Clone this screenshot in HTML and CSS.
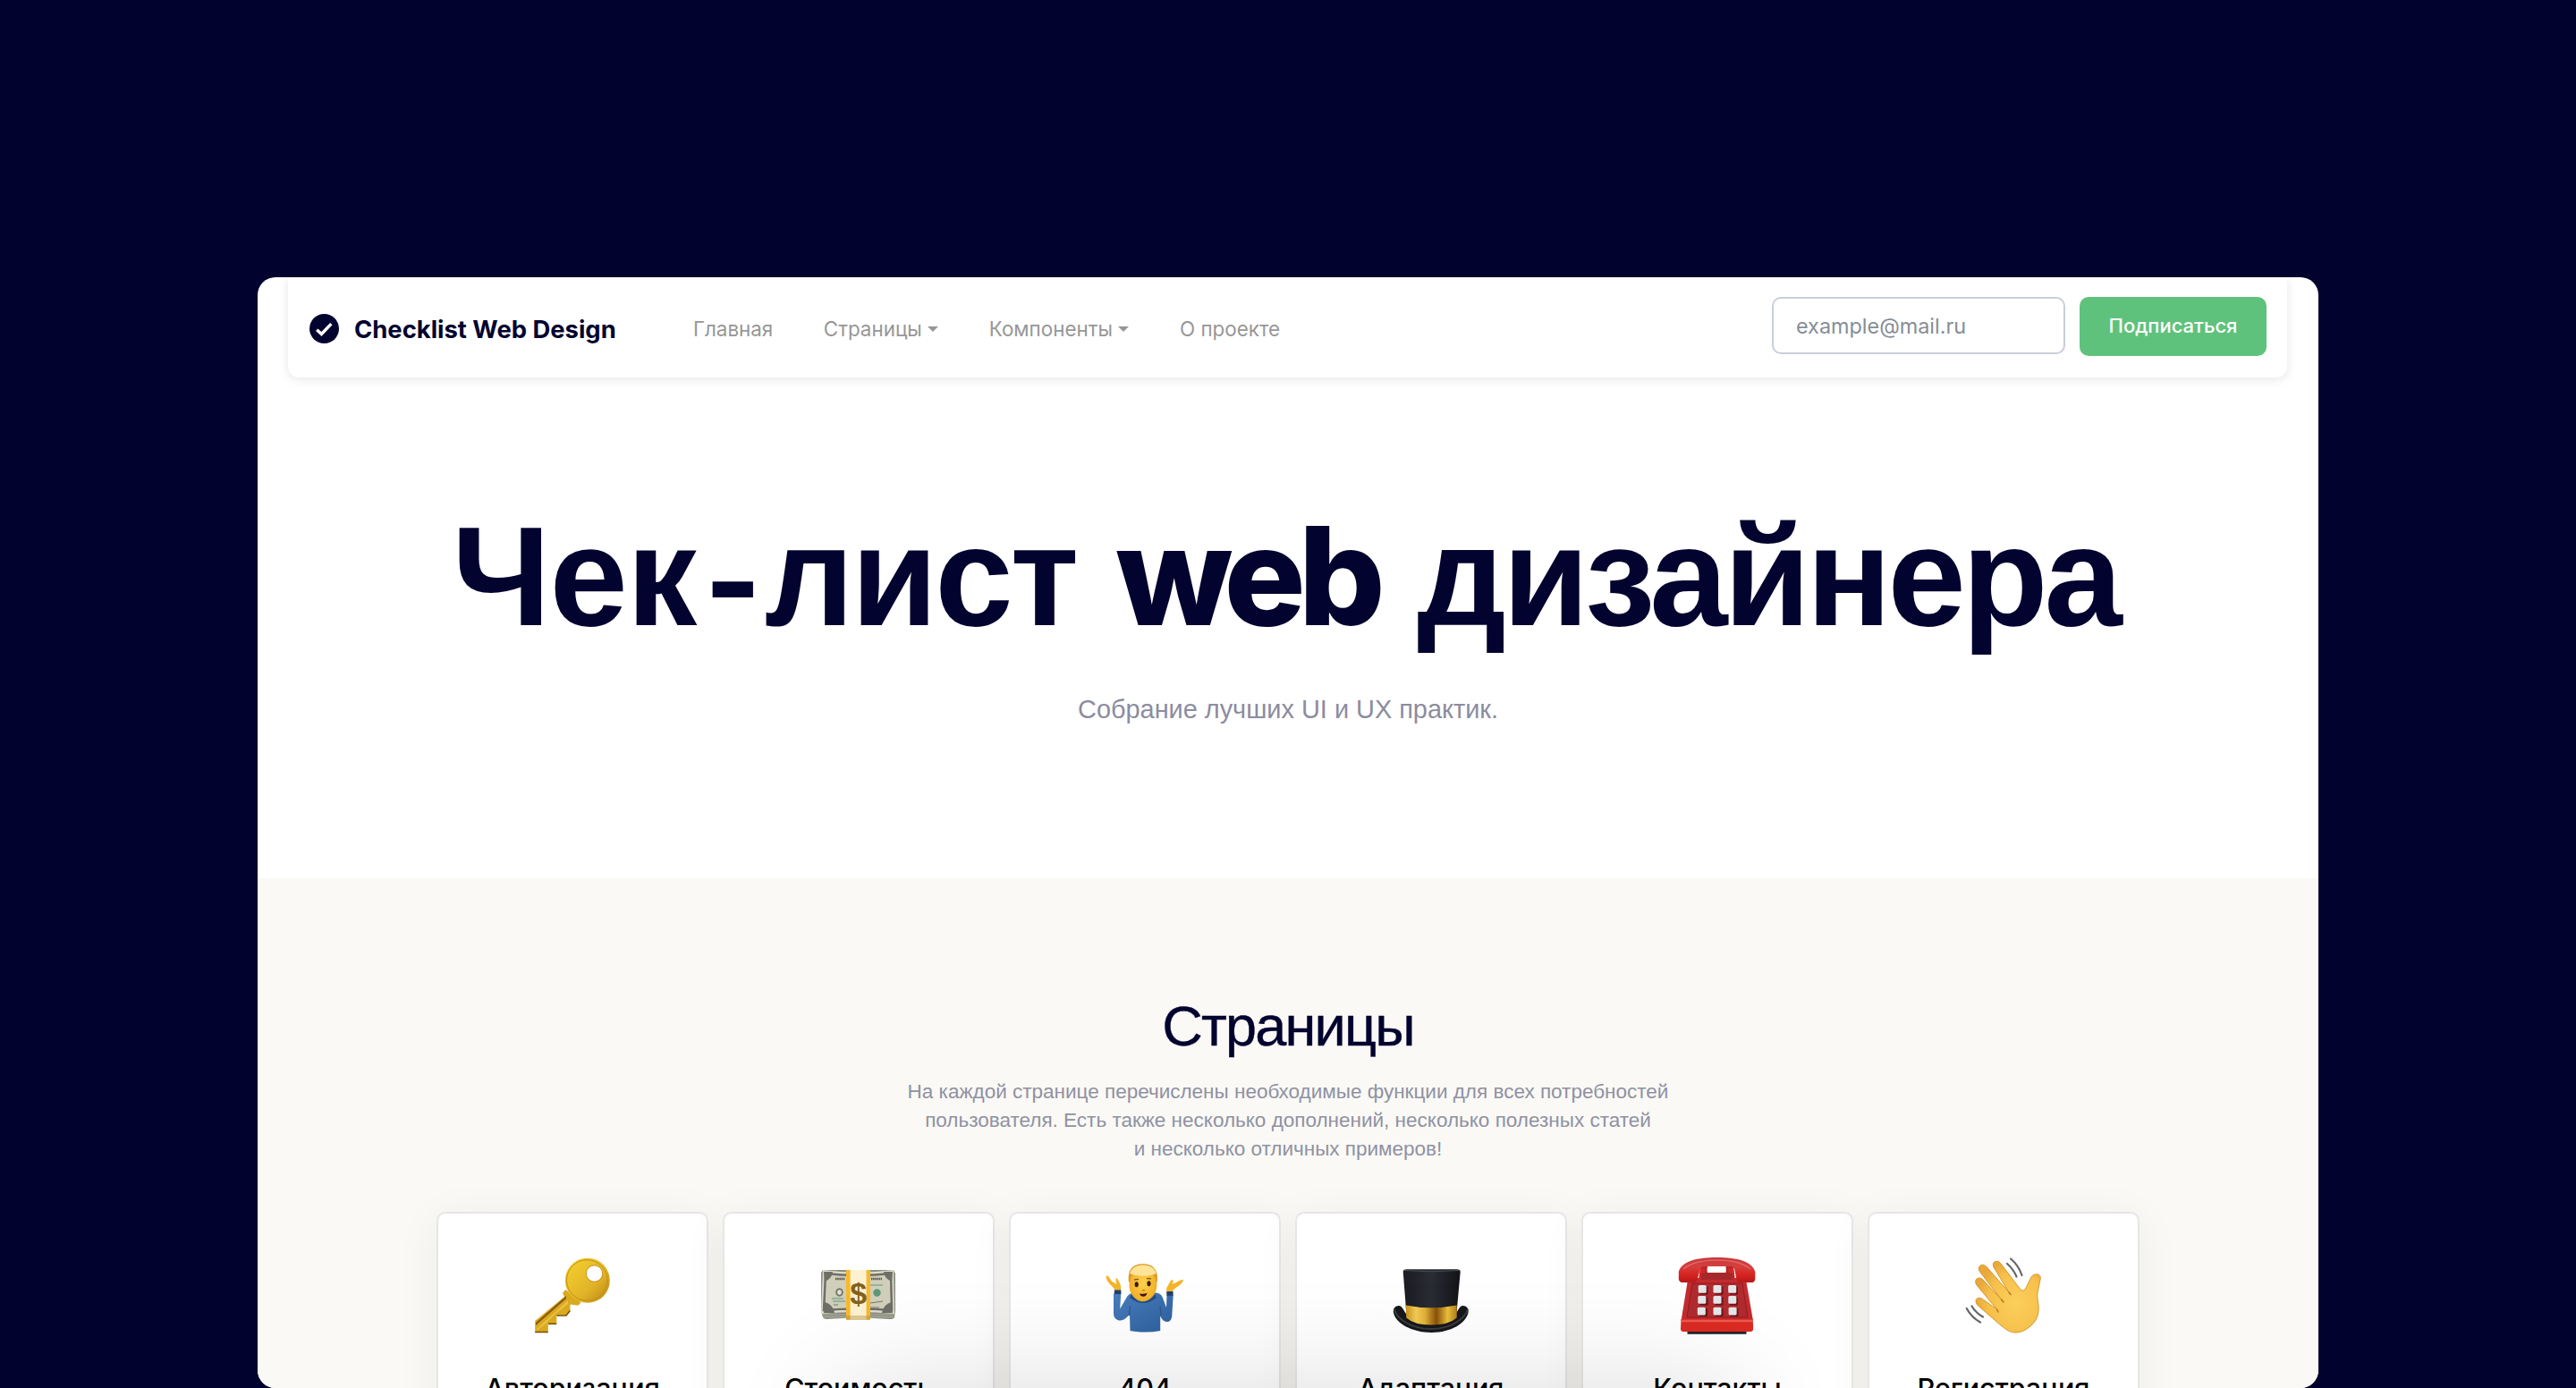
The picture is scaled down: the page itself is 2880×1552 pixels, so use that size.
FILE: index.html
```html
<!DOCTYPE html>
<html lang="ru">
<head>
<meta charset="utf-8">
<title>Checklist Web Design</title>
<link rel="stylesheet" href="styles.css">
</head>
<body>
<div class="window">
  <nav class="navbar">
    <a class="brand">
      <svg class="brand-icon" viewBox="0 0 32 32"><circle cx="16" cy="16" r="16" fill="#03032f"/><path d="M8 17.2l5 4.6 10.6-11" fill="none" stroke="#fff" stroke-width="3.4"/></svg>
      <span>Checklist Web Design</span>
    </a>
    <div class="links">
      <a>Главная</a>
      <a>Страницы<i class="caret"></i></a>
      <a>Компоненты<i class="caret"></i></a>
      <a>О проекте</a>
    </div>
    <form class="subscribe">
      <input class="email" type="text" placeholder="example@mail.ru">
      <button class="submit" type="button">Подписаться</button>
    </form>
  </nav>

  <header class="hero">
    <h1 class="title"><span class="wide">Чек</span><span class="latin dash">-</span>лист <span class="latin">web</span> <span class="tight">дизайнера</span></h1>
    <p class="subtitle">Собрание лучших UI и UX практик.</p>
  </header>

  <section class="pages">
    <h2 class="heading">Страницы</h2>
    <p class="lead">На каждой странице перечислены необходимые функции для всех потребностей<br>пользователя. Есть также несколько дополнений, несколько полезных статей<br>и несколько отличных примеров!</p>
    <div class="cards">
      <article class="card">
        <svg class="icon" viewBox="0 0 96 96">
          <defs>
            <linearGradient id="gold" x1="0" y1="0" x2="1" y2="1"><stop offset="0" stop-color="#f7d32f"/><stop offset=".6" stop-color="#e2b428"/><stop offset="1" stop-color="#b98512"/></linearGradient>
          </defs>
          <path d="M40.2 42L37 46l2 4L6.2 77v13h14.600v-9.500l2.500-.5h7v-9l3-.5h7.500l4.700-5v-7l9 1.200 3-3.500z" fill="#d9a920"/>
          <path d="M41 49L7 79v3l34-30z" fill="#8a5a0c"/>
          <path d="M43 54L8 86v2l10-8 9-9 16-13z" fill="#e9c043"/>
          <path d="M6.200 89.500h14.600M21 80.200h9.200M30.500 71h10.500l4.300-5.500" fill="none" stroke="#7a4d08" stroke-width="1.500"/>
          <path fill-rule="evenodd" d="M64.800 6.700a25 25 0 1 0 .01 0zM72.500 15a9 9 0 1 1-.01 0z" fill="url(#gold)"/>
          <circle cx="64.300" cy="31.500" r="22.800" fill="none" stroke="#bf8f16" stroke-width="1"/>
          <circle cx="72.500" cy="24" r="9.200" fill="none" stroke="#c7961a" stroke-width="1"/>
        </svg>
        <h3 class="name">Авторизация</h3>
      </article>
      <article class="card">
        <svg class="icon" viewBox="0 0 96 96">
          <path d="M6 66l2 7q1 2 4 2l35-2 36 2q4 0 5-2l1-7V24l-2-4H8l-2 3z" fill="#8d9080"/>
          <path d="M7 70h81M8 72.500h79" stroke="#b5b7a6" stroke-width=".8"/>
          <path d="M8 20q39 5 79 0l1 49q-41-4-82 0z" fill="#deddcb"/>
          <path d="M11 24q36 4 73 0l1 41q-38-3-76 0z" fill="#cfcfba" stroke="#6f6e68" stroke-width="2.500"/>
          <g fill="#6f6e68"><path d="M9 22h10q-1 8-9 11zM86 22H76q1 8 9 11zM9 68h12q-2-10-11-12zM86 68H74q2-10 11-12z"/></g>
          <path d="M22 30h11M62 30h12" stroke="#55554f" stroke-width="2.500" stroke-dasharray="1.500 .7"/>
          <ellipse cx="26.500" cy="45" rx="3.300" ry="3.800" fill="#e4e2d2" stroke="#77776b" stroke-width="2"/>
          <circle cx="68.500" cy="45.500" r="4.200" fill="#5d9878"/>
          <path d="M18 52h13M19 55h14M61 37h14" stroke="#86aa90" stroke-width="1.300"/>
          <path d="M61 57l14-2M20 59h5M61 62h10" stroke="#77776b" stroke-width="1"/>
          <path d="M34 20h27v55.800H34z" fill="#f9b82a"/>
          <path d="M38.600 20h18v55.800h-18z" fill="#fdf1cf"/>
          <path d="M34 71h27v4.800H34z" fill="#a98d3d" opacity=".4"/>
          <text x="47.600" y="57.500" text-anchor="middle" class="dollar">$</text>
        </svg>
        <h3 class="name">Стоимость</h3>
      </article>
      <article class="card">
        <svg class="icon" viewBox="0 0 96 96">
          <defs>
            <linearGradient id="shirt" x1="0" y1="0" x2="1" y2="1"><stop offset="0" stop-color="#4a7dbd"/><stop offset="1" stop-color="#2c5f9c"/></linearGradient>
            <radialGradient id="face" cx=".5" cy=".5" r=".65"><stop offset="0" stop-color="#ffd34d"/><stop offset="1" stop-color="#eda51f"/></radialGradient>
          </defs>
          <g fill="#f4b52c"><path d="M14.500 43c-1-4-5-5.500-8-10-2.500-4-2-7-1-6.800 2 .3 4 5 6.500 7l4 2.800-.5-5c0-3 2-2 3.500 2 1.500 3 3 5 1.800 10z"/><path d="M79 44c1-3 4-4 6.500-6 3-2 5.500-5 5.300-7-1.500-.8-5.500 2-8.800 3.500l-3.500 1c1.500-3 1.500-4.500 0-4.500-2 .5-3 4-4.500 6-1.500 2.500-2.500 4-1.600 7z"/></g>
          <path d="M13 46.500h8.200l-1 17L28 50q3-4.500 8-4.500h24q5 0 7.500 4.500l4.500 12 .5-14h7.200l-1.500 24q-1 6-5.500 6-5-.5-7.500-6.500L65.200 88q-16 3-33.700 0l-.5-18-5 4.500q-4 3-8.500 1.500-4.500-2-4.500-7z" fill="url(#shirt)"/>
          <path d="M31.500 60l-1 11M65 60l1 11" stroke="#2a568e" stroke-width="1.200"/>
          <path d="M13.800 42.500h7.600v4.500h-7.600zM72.300 44h7.300v4.800h-7.300z" fill="#233f6d"/>
          <path d="M33 47q13 13 26 0l2 4q-14 12-30 0z" fill="#254e85"/>
          <path d="M30.500 27c0-8 6-12 15.500-12s15.300 4 15.300 12v11c0 9-8 17.300-15.500 17.300S30.500 47 30.500 38z" fill="url(#face)"/>
          <path d="M29.800 33c-1-12 3-19.700 16-19.700s17 8 16 19.700l-1.500 1c0-5-1.500-7.500-4-9.500-7 2-16 1.500-21 0-2.500 2-4 4-4 9.500z" fill="#d99b2b"/>
          <path d="M31 24c2-6 7-9.500 15-9.500S59 18 60.500 24c-9 4-21 3.500-29.500 0z" fill="#ffe396"/>
          <ellipse cx="38.700" cy="36.300" rx="2.100" ry="3" fill="#3b1e08"/><ellipse cx="52.500" cy="35.300" rx="2.100" ry="3" fill="#3b1e08"/>
          <path d="M36 31l5-.7M50 29.500l5 .3" stroke="#8b5718" stroke-width="1.300"/>
          <path d="M45 42.500q1.500 1 3-.2" fill="none" stroke="#b9761b" stroke-width="1.200"/>
          <path d="M42 46.500q5 1 8.500-.8-1 3.800-4 4-3.500 0-4.500-3.200z" fill="#45140b"/>
        </svg>
        <h3 class="name">404</h3>
      </article>
      <article class="card">
        <svg class="icon" viewBox="0 0 96 96">
          <defs>
            <linearGradient id="felt" x1="0" x2="1"><stop offset="0" stop-color="#1b1c20"/><stop offset=".5" stop-color="#2a2c35"/><stop offset="1" stop-color="#121316"/></linearGradient>
            <linearGradient id="ribbon" x1="0" x2="1"><stop offset="0" stop-color="#c8941c"/><stop offset=".2" stop-color="#f4cc55"/><stop offset=".38" stop-color="#e1b037"/><stop offset=".6" stop-color="#8a500a"/><stop offset=".82" stop-color="#eac03c"/><stop offset="1" stop-color="#b27f15"/></linearGradient>
          </defs>
          <path d="M12 60c-4 0-7 3-6 8 2 11 20 22 42.500 22S87 79 89.500 68c1-5-2-8-6-8-4 .5-5 5-8 9H20c-3-4-4-8.500-8-9z" fill="#17181b"/>
          <path d="M7 64c2 10 18 22 41 22s38-12 41-22" fill="none" stroke="#3b3c42" stroke-width="2"/>
          <path d="M16.700 22q0-2.700 4-2.700h56q4 0 4 2.700l-4.200 46H20.300z" fill="url(#felt)"/>
          <path d="M18 20.500q31 2.500 61.500 0" fill="none" stroke="#4b4d56" stroke-width="1"/>
          <path d="M19.700 59.500q28 5.500 57 0v14q-9 8-28.500 8-19 0-28-8z" fill="url(#ribbon)"/>
        </svg>
        <h3 class="name">Адаптация</h3>
      </article>
      <article class="card">
        <svg class="icon" viewBox="0 0 96 96">
          <defs>
            <linearGradient id="handset" x1="0" y1="0" x2="0" y2="1"><stop offset="0" stop-color="#c9373a"/><stop offset=".35" stop-color="#d4403f"/><stop offset=".7" stop-color="#d8231f"/><stop offset="1" stop-color="#b5191b"/></linearGradient>
          </defs>
          <path d="M14.500 87h66v4.700h-66z" fill="#222326"/>
          <path d="M29 16h8v7h20.500v-7H66l2 16H27z" fill="#b3262a"/>
          <path d="M15 31q1-2 4-2h57q3 0 4 2l8 46H7.500z" fill="#c42a2e"/>
          <path d="M20 35h56l6 38H14z" fill="#b02b2f" stroke="#8f1d22" stroke-width="1"/>
          <path d="M7.500 75h80.300l.3 11q-.3 3-3 3H10q-3 0-3-3z" fill="#db2a22"/>
          <path d="M8 77h80" stroke="#ec5a50" stroke-width="2.500"/>
          <path d="M4.800 30V22C8 10.500 24 6 47.500 6S87 10.500 90.300 22v8q-.5 4-3.500 4H73q-2.500 0-3.500-3L67 18.500q-1-2.500-4-2.500H33q-3 0-4 2.500L25.500 31q-1 3-3.500 3H8.500q-3 0-3.700-4z" fill="url(#handset)"/>
          <path d="M10 19Q22 9 47.500 9T85 19" fill="none" stroke="#ea7773" stroke-width="1.500" opacity=".7"/>
          <path d="M29 18h5v11h-5zM60.500 18h5v11h-5z" fill="#d22624"/>
          <path d="M30 24q18-4 35 0v7H30z" fill="#a5282b"/>
          <rect x="36.600" y="17" width="20.800" height="6" rx="1" fill="#fff"/>
          <g fill="#6b1518"><path d="M28.500 38.500h9v9h-9zM45.500 38.500h9v9h-9zM62 38.500h9v9h-9zM28.500 50.500h9v9h-9zM45.500 50.500h9v9h-9zM62 50.500h9v9h-9zM28 63h9v9h-9zM45.500 63h9v9h-9zM62.500 63h9v9h-9z"/></g>
          <g fill="#e4e6e8"><rect x="26.700" y="37" width="9" height="8.700" rx="1.500"/><rect x="43.500" y="37" width="9" height="8.700" rx="1.500"/><rect x="60.200" y="37" width="9" height="8.700" rx="1.500"/><rect x="26.300" y="49" width="9" height="8.700" rx="1.500"/><rect x="43.500" y="49" width="9" height="8.700" rx="1.500"/><rect x="60.300" y="49" width="9" height="8.700" rx="1.500"/><rect x="25.800" y="61.700" width="9" height="8.700" rx="1.500"/><rect x="43.500" y="61.700" width="9" height="8.700" rx="1.500"/><rect x="60.600" y="61.700" width="9" height="8.700" rx="1.500"/></g>
        </svg>
        <h3 class="name">Контакты</h3>
      </article>
      <article class="card">
        <svg class="icon" viewBox="0 0 96 96">
          <defs>
            <radialGradient id="palm" cx=".62" cy=".58" r=".6"><stop offset="0" stop-color="#fbcf5b"/><stop offset=".7" stop-color="#f6c14b"/><stop offset="1" stop-color="#e9a93a"/></radialGradient>
          </defs>
          <path d="M45 82L18.500 59c-4-6 1-10 6-6.500L40.500 64 18 37c-4-6 2-11 7-6l20.500 22L21.500 22c-4-6 3-11 8-5l24.500 28-17-28c-3-6 4-9.500 8-4l22 29c2.500 2 5 1 7-4l5-10c3-5 11-4 10.300 1.500l-3.300 16c-1 6 2 14 1 21C86 79 73 89.500 62 90c-6 .3-11-3-17-8z" fill="url(#palm)" stroke="#d8962f" stroke-width="1" stroke-linejoin="round"/>
          <path d="M40.500 64l1.500 3M45.500 53l2.500 3M54 45l2 2.500" stroke="#b77420" stroke-width="1.500" stroke-linecap="round"/>
          <path d="M56 7.500Q65 15 68.500 26M52 13q7 6 10.500 14.500M6.700 63Q12 73 22 78.500M12.500 60.500Q17 68 25 72.500" fill="none" stroke="#666" stroke-width="2.200" stroke-linecap="round"/>
        </svg>
        <h3 class="name">Регистрация</h3>
      </article>
    </div>
  </section>
</div>
</body>
</html>
```
FILE: styles.css
```css
* { box-sizing: border-box; }

body {
  margin: 0;
  height: 1552px;
  padding: 310px 288px 0;
  overflow: hidden;
  background: #02022f;
  color: #03032f;
  font-family: "Liberation Sans", Arial, sans-serif;
}

.window {
  position: relative;
  height: 1241.5px;
  overflow: hidden;
  border-radius: 20px;
  background: #fff;
}

/* soft shade rising from the bottom edge */
.window::after {
  content: "";
  position: absolute;
  top: 1242px;
  left: 650px;
  width: 1004px;
  height: 300px;
  box-shadow: 0 0 130px rgba(0, 0, 0, .14);
}

.navbar {
  display: flex;
  align-items: center;
  width: 2235px;
  height: 112px;
  margin: 0 34px;
  padding: 3px 23px 0 24px;
  border-radius: 0 0 12px 12px;
  background: #fff;
  box-shadow: 0 2px 12px rgba(0, 0, 0, .1);
  font-family: Inter, sans-serif;
}

.brand { display: flex; align-items: center; gap: 17px; width: 429px; font-size: 27.4px; font-weight: 700; line-height: 40px; white-space: nowrap; }
.brand-icon { width: 33px; height: 33px; }

.links { display: flex; gap: 56.5px; color: #979797; font-size: 22.4px; line-height: 32px; }
.caret {
  display: inline-block;
  margin-left: 6.5px;
  vertical-align: 5px;
  border: 6px solid transparent;
  border-top-color: #979797;
  border-bottom: 0;
}

.subscribe { display: flex; align-self: flex-start; gap: 16px; margin: 19px 0 0 auto; }
.email {
  width: 328px;
  height: 64px;
  padding: 0 25px;
  border: 2px solid #c8cfda;
  border-radius: 10px;
  background: #fff;
  font: 23.4px Inter, sans-serif;
}
.email::placeholder { color: #868e96; opacity: 1; }
.submit {
  width: 209px;
  height: 66px;
  padding: 0 0 2px;
  border: 0;
  border-radius: 10px;
  background: #5fc27c;
  color: #fff;
  font: 500 22px Inter, sans-serif;
}

.hero { height: 560px; padding-top: 133px; text-align: center; }
.title { margin: 0 0 38px -6px; font-size: 157px; font-weight: 700; line-height: 180px; letter-spacing: -3px; word-spacing: 3px; white-space: nowrap; }
.latin { font-family: Inter, sans-serif; font-size: 152px; font-weight: 800; line-height: 0; letter-spacing: -8px; }
.dash { margin: 0 12px 0 9px; font-size: 135px; }
.wide { letter-spacing: -1px; }
.tight { letter-spacing: -4.1px; }
.subtitle { margin: 0; color: #8c8ca0; font-size: 28.9px; line-height: 40px; }

.pages { height: 600px; padding-top: 127px; background: #faf9f5; text-align: center; }
.heading { margin: 0 0 20px; font-size: 63px; font-weight: 400; line-height: 76px; letter-spacing: -1.8px; -webkit-text-stroke: .4px #03032f; }
.lead { margin: 0; color: #8f91a3; font-size: 22.5px; line-height: 32px; }

.cards { display: grid; grid-template-columns: repeat(6, 304px); gap: 16px; margin: 54px 0 0 200px; }
.card {
  height: 330px;
  padding-top: 43px;
  border: 2px solid #e6e6e7;
  border-radius: 10px;
  background: #fff;
  box-shadow: 0 8px 50px rgba(0, 0, 0, .06);
}
.icon { display: block; width: 96px; height: 96px; margin: 0 auto 36px; }
.dollar { font: 700 34px "Liberation Sans", Arial, sans-serif; fill: #83611b; }
.name { margin: 0; color: #000; font: 500 30.5px/40px Inter, sans-serif; }
```
